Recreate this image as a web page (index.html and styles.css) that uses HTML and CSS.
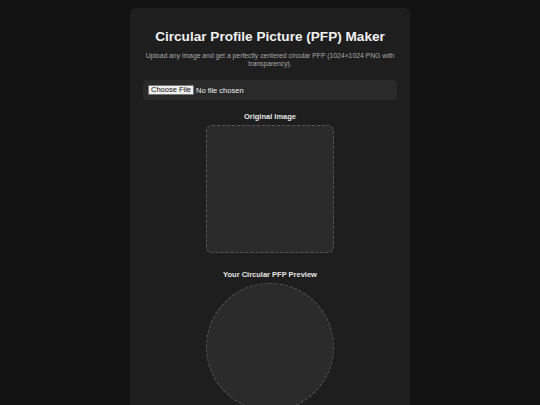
FILE: index.html
```html
<!DOCTYPE html>
<html>
<head>
<meta charset="utf-8">
<link rel="stylesheet" href="styles.css">
</head>
<body>
<main class="card">
  <h1 class="title">Circular Profile Picture (PFP) Maker</h1>
  <p class="subtitle">Upload any image and get a perfectly centered circular PFP (1024×1024 PNG with transparency).</p>
  <div class="upload">
    <span class="file-btn">Choose File</span>
    <span class="file-name">No file chosen</span>
  </div>
  <section class="block">
    <h2 class="label">Original Image</h2>
    <div class="square"></div>
  </section>
  <section class="block">
    <h2 class="label">Your Circular PFP Preview</h2>
    <div class="circle"></div>
  </section>
</main>
</body>
</html>
```

FILE: styles.css
```css
html, body {
  margin: 0;
  padding: 0;
  background: #121212;
  font-family: "Liberation Sans", Arial, sans-serif;
  color: #eee;
}
body {
  padding-top: 8px;
}
.card {
  width: 280px;
  margin: 0 auto;
  background: #1e1e1e;
  border-radius: 6px;
  padding: 20px 13px 20px;
  box-sizing: border-box;
  text-align: center;
}
.title {
  margin: 0;
  font-size: 13.6px;
  line-height: 18px;
  font-weight: bold;
  color: #f2f2f2;
}
.subtitle {
  margin: 6px 0 0;
  font-size: 6.8px;
  line-height: 8px;
  color: #a8a8a8;
}
.upload {
  margin-top: 12px;
  height: 20px;
  background: #2a2a2a;
  border-radius: 4px;
  display: flex;
  align-items: center;
  padding-left: 5px;
  gap: 2px;
  text-align: left;
}
.file-btn {
  background: #efefef;
  color: #111;
  border: 1px solid #767676;
  border-radius: 1px;
  font-size: 7.5px;
  line-height: 8px;
  padding: 0 2px;
}
.file-name {
  font-size: 7.5px;
  color: #eee;
}
.block {
  display: flex;
  flex-direction: column;
  align-items: center;
}
.label {
  margin: 12px 0 4px;
  font-size: 7.5px;
  line-height: 9px;
  font-weight: bold;
  color: #e6e6e6;
}
.block + .block .label {
  margin-top: 17px;
}
.square, .circle {
  width: 128px;
  height: 128px;
  box-sizing: border-box;
  border: 1px dashed #555;
  background: #2b2b2b;
}
.square {
  border-radius: 6px;
}
.circle {
  border-radius: 50%;
}
```
